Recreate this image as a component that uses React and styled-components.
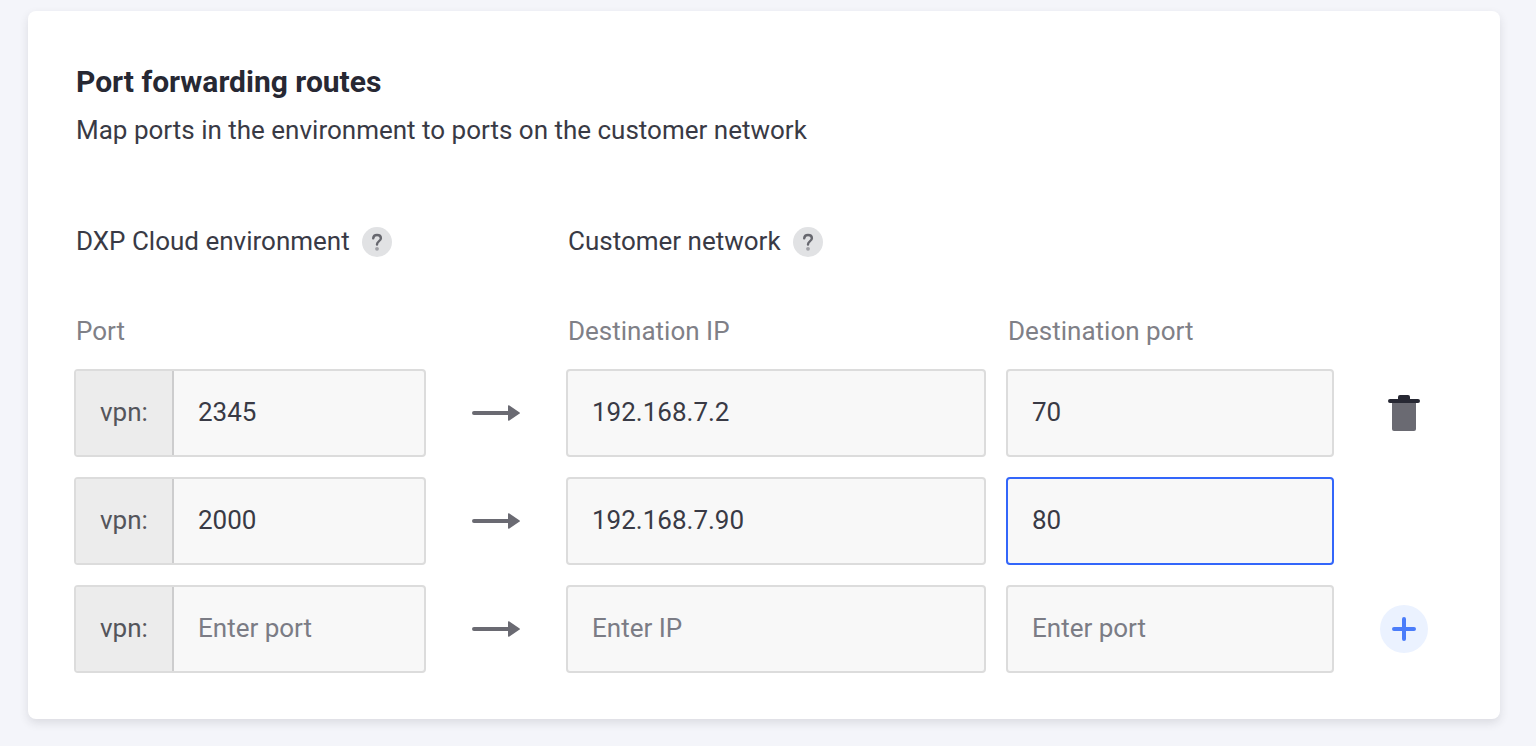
import React, { useState } from "react";
import styled, { createGlobalStyle } from "styled-components";

const GlobalStyle = createGlobalStyle`
  *, *::before, *::after { box-sizing: border-box; }
  body {
    margin: 0;
    background: #f4f5fa;
    color: #393a45;
    font-family: Roboto, "Liberation Sans", sans-serif;
    font-size: 26px;
    line-height: 32px;
  }
  input, button { font: inherit; }
`;

const Page = styled.main`
  padding: 11px 36px 27px 28px;
`;

const Card = styled.section`
  padding: 51px 26px 46px 46px;
  background: #fff;
  border-radius: 8px;
  box-shadow: 0 4px 10px rgba(39, 40, 51, 0.12);
`;

const Header = styled.header`
  padding-left: 2px;
  margin-bottom: 79px;
`;

const Title = styled.h1`
  margin: 0 0 12px;
  color: #272833;
  font-size: 30px;
  font-weight: 700;
  line-height: 40px;
`;

const Description = styled.p`
  margin: 0;
`;

const RouteGrid = styled.div`
  display: grid;
  grid-template-columns: minmax(0, 352fr) 140px minmax(0, 768fr) 140px;
  align-items: center;
  margin-bottom: ${(p) => p.$gap || 0}px;
`;

const Destination = styled.div`
  grid-column: 3;
  display: grid;
  grid-template-columns: minmax(0, 420fr) minmax(0, 328fr);
  gap: 20px;
`;

const GroupHeading = styled.h2`
  grid-column: ${(p) => p.$column};
  display: flex;
  align-items: flex-end;
  gap: 12px;
  margin: 0;
  padding-left: 2px;
  font-size: 26px;
  font-weight: 400;
  line-height: 32px;
  white-space: nowrap;
`;

const HelpButton = styled.button`
  display: grid;
  place-items: center;
  width: 30px;
  height: 30px;
  padding: 0;
  border: 0;
  border-radius: 50%;
  background: #e1e2e4;
  cursor: pointer;
`;

const ColumnLabel = styled.label`
  padding-left: 2px;
  color: #7f8087;
`;

const Routes = styled.div`
  display: grid;
  gap: 20px;
`;

const Field = styled.div`
  display: flex;
  height: 88px;
  border: 2px solid #dcdcdc;
  border-radius: 4px;
  background: #f8f8f8;
  overflow: hidden;

  ${(p) => p.$active && "border-color: #3366fa;"}
`;

const Prefix = styled.span`
  display: flex;
  flex: none;
  align-items: center;
  width: 98px;
  padding: 0 0 2px 24px;
  border-right: 2px solid #cdcdce;
  background: #ececec;
  color: #54555b;
`;

const TextInput = styled.input`
  flex: 1;
  min-width: 0;
  padding: 0 24px 2px;
  border: 0;
  outline: 0;
  background: transparent;
  color: #393a45;

  &::placeholder {
    color: #7b7c85;
    opacity: 1;
  }
`;

const ArrowCell = styled.span`
  display: grid;
  place-items: center;
`;

const IconButton = styled.button`
  display: grid;
  place-items: center;
  justify-self: center;
  width: 48px;
  height: 48px;
  padding: 0;
  border: 0;
  border-radius: 50%;
  background: ${(p) => (p.$tinted ? "#ebf2ff" : "transparent")};
  cursor: pointer;
`;

const QuestionIcon = () => (
  <svg width="30" height="30" viewBox="0 0 30 30" fill="none" aria-hidden="true">
    <path
      d="M11.2 11.4C11.4 9.2 12.9 8 15 8c2.300 0 3.900 1.300 3.900 3.200 0 1.600-.9 2.300-2.100 3.200-1.300 1-1.800 1.600-1.800 3.200"
      stroke="#66676e"
      strokeWidth="2.400"
      strokeLinecap="round"
    />
    <circle cx="15" cy="21.800" r="1.900" fill="#a0a1a6" />
  </svg>
);

const ArrowIcon = () => (
  <svg width="48" height="16" viewBox="0 0 48 16" fill="#6a6a72" aria-hidden="true">
    <path d="M2 6h34V1q0-1 1-.7L47.300 7.200q1.400.8 0 1.600L37 15.700q-1 .3-1-.7v-5H2a2 2 0 0 1 0-4Z" />
  </svg>
);

const TrashIcon = () => (
  <svg width="32" height="36" viewBox="0 0 32 36" aria-hidden="true">
    <path d="M4 8h24v26a2 2 0 0 1-2 2H6a2 2 0 0 1-2-2Z" fill="#6a6a72" />
    <path
      d="M2 4h8V2a2 2 0 0 1 2-2h8a2 2 0 0 1 2 2v2h8a2 2 0 0 1 0 4H2a2 2 0 0 1 0-4Z"
      fill="#272833"
    />
  </svg>
);

const PlusIcon = () => (
  <svg width="24" height="24" viewBox="0 0 24 24" aria-hidden="true">
    <path
      d="M12 2v20M2 12h20"
      stroke="#4b7dfa"
      strokeWidth="4"
      strokeLinecap="round"
    />
  </svg>
);

const initialRoutes = [
  { port: "2345", ip: "192.168.7.2", destPort: "70", action: "delete" },
  { port: "2000", ip: "192.168.7.90", destPort: "80", active: true },
  { port: "", ip: "", destPort: "", action: "add" },
];

function RouteRow({ route, index, onChange }) {
  const bind = (key, label) => ({
    id: `${key}-${index}`,
    value: route[key],
    onChange: (e) => onChange(index, key, e.target.value),
    "aria-label": index > 0 ? `${label}, route ${index + 1}` : undefined,
  });

  return (
    <RouteGrid>
      <Field>
        <Prefix>vpn:</Prefix>
        <TextInput placeholder="Enter port" {...bind("port", "Port")} />
      </Field>
      <ArrowCell>
        <ArrowIcon />
      </ArrowCell>
      <Destination>
        <Field>
          <TextInput placeholder="Enter IP" {...bind("ip", "Destination IP")} />
        </Field>
        <Field $active={route.active}>
          <TextInput placeholder="Enter port" {...bind("destPort", "Destination port")} />
        </Field>
      </Destination>
      {route.action === "delete" && (
        <IconButton type="button" aria-label="Delete route">
          <TrashIcon />
        </IconButton>
      )}
      {route.action === "add" && (
        <IconButton type="button" aria-label="Add route" $tinted>
          <PlusIcon />
        </IconButton>
      )}
    </RouteGrid>
  );
}

export default function App() {
  const [routes, setRoutes] = useState(initialRoutes);
  const update = (index, key, value) =>
    setRoutes((all) => all.map((r, i) => (i === index ? { ...r, [key]: value } : r)));

  return (
    <>
      <GlobalStyle />
      <Page>
        <Card>
          <Header>
            <Title>Port forwarding routes</Title>
            <Description>Map ports in the environment to ports on the customer network</Description>
          </Header>
          <RouteGrid $gap={58}>
            <GroupHeading $column={1}>
              DXP Cloud environment
              <HelpButton type="button" aria-label="About the DXP Cloud environment">
                <QuestionIcon />
              </HelpButton>
            </GroupHeading>
            <GroupHeading $column={3}>
              Customer network
              <HelpButton type="button" aria-label="About the customer network">
                <QuestionIcon />
              </HelpButton>
            </GroupHeading>
          </RouteGrid>
          <RouteGrid $gap={22}>
            <ColumnLabel htmlFor="port-0">Port</ColumnLabel>
            <Destination>
              <ColumnLabel htmlFor="ip-0">Destination IP</ColumnLabel>
              <ColumnLabel htmlFor="destPort-0">Destination port</ColumnLabel>
            </Destination>
          </RouteGrid>
          <Routes>
            {routes.map((route, i) => (
              <RouteRow key={i} route={route} index={i} onChange={update} />
            ))}
          </Routes>
        </Card>
      </Page>
    </>
  );
}
